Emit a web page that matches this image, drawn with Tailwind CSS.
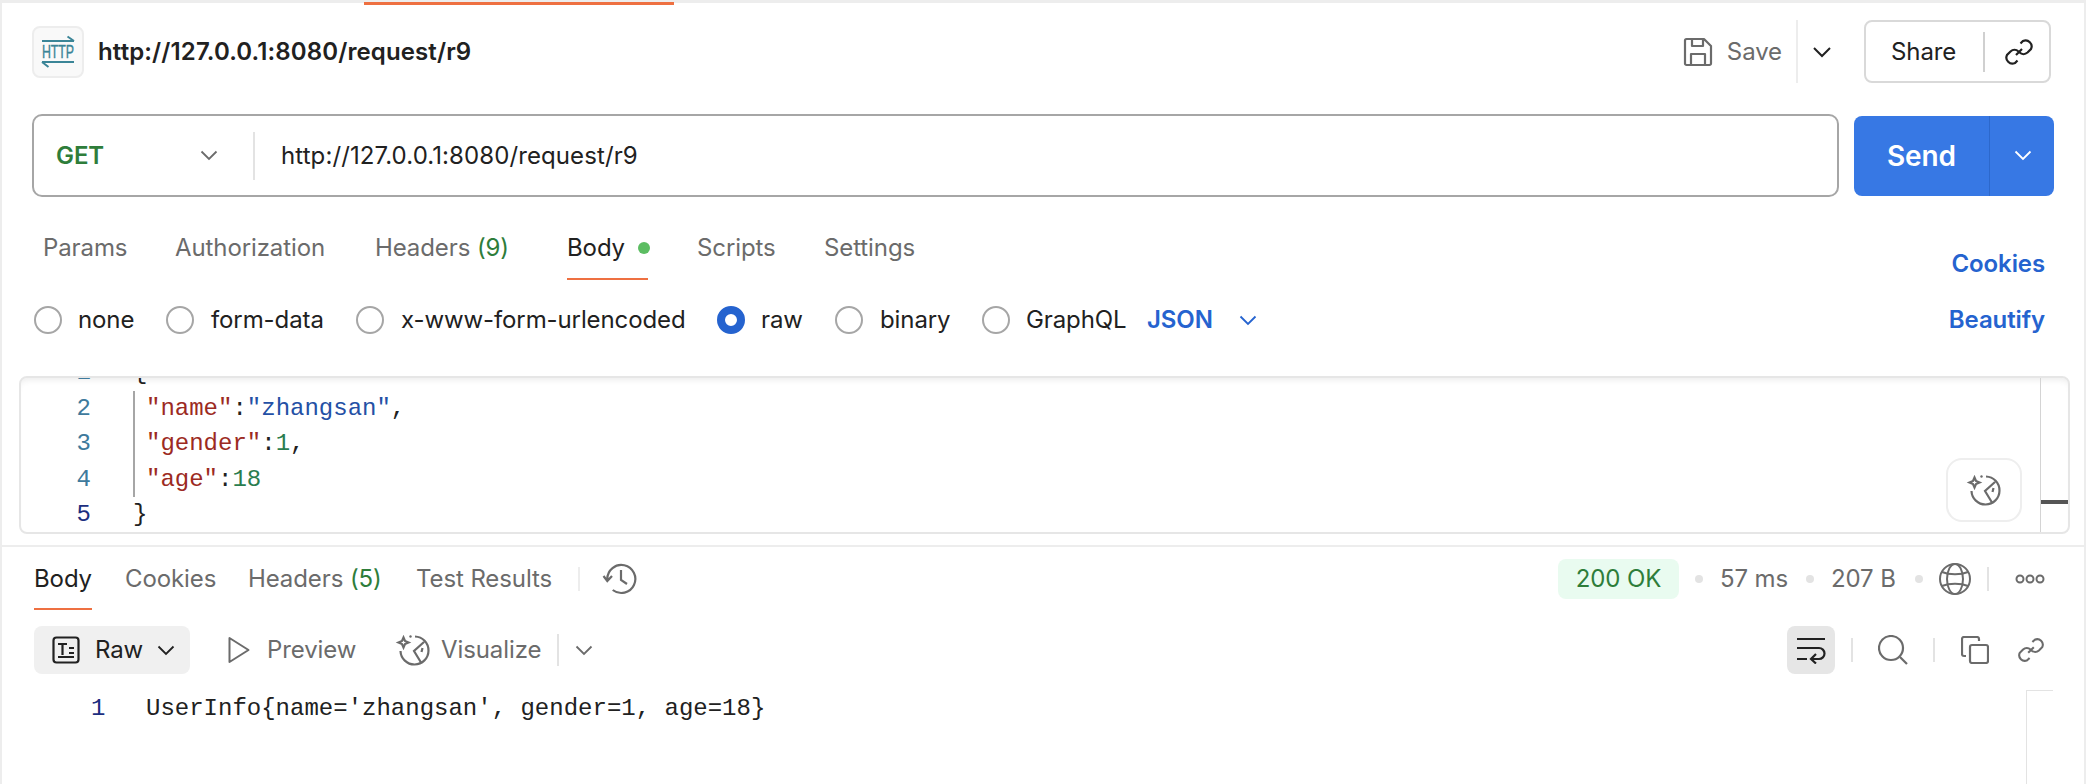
<!doctype html>
<html>
<head>
<meta charset="utf-8">
<script src="https://cdn.jsdelivr.net/npm/@tailwindcss/browser@4"></script>
</head>
<body class="bg-white">
<div class="relative w-[2086px] h-[784px] overflow-hidden bg-white font-['Inter',sans-serif] text-[24px] tracking-[-0.1px] text-[#212121] border-x-2 border-[#ededed] box-border">
  <!-- top strip -->
  <div class="flex h-[5px] border-t-[3px] border-[#ededed]">
    <div class="ml-[362px] w-[310px] h-[3px] -mt-[1px] bg-[#ee7041]"></div>
  </div>

  <!-- title row -->
  <div class="flex items-center h-[63px] mt-[15px] pl-[30px] pr-[33px]">
    <div class="w-[52px] h-[52px] rounded-lg border-2 border-[#ededed] bg-[#f9f9f9] flex items-center justify-center">
      <svg class="overflow-visible" width="36" height="42" viewBox="0 0 36 42" fill="none" stroke="#3b8597" stroke-width="2">
        <path d="M2 10h32M34 10l-6.500-4.500M2 31h32M2 31l6.500 5" />
        <text x="18" y="27" text-anchor="middle" font-family="Liberation Sans" font-size="18" fill="#3b8597" stroke="#3b8597" stroke-width="0.4" textLength="32" lengthAdjust="spacingAndGlyphs">HTTP</text>
      </svg>
    </div>
    <div class="ml-[14px] font-semibold tracking-[0.12px]">http://127.0.0.1:8080/request/r9</div>
    <div class="ml-auto flex items-center h-full">
      <svg width="30" height="30" viewBox="0 0 30 30" fill="none" stroke="#6b6b6b" stroke-width="2.200" stroke-linejoin="round"><path d="M2 3.500a1.500 1.500 0 0 1 1.500-1.500H21l7 7v17.500a1.500 1.500 0 0 1-1.500 1.500h-23A1.500 1.500 0 0 1 2 26.500zM9 2v7h11V2M8 28V17h14v11"/></svg>
      <span class="ml-[14px] text-[#6b6b6b]">Save</span>
      <div class="ml-[14px] w-[2px] h-[63px] bg-[#ededed]"></div>
      <svg class="ml-[14px]" width="20" height="12" viewBox="0 0 20 12" fill="none" stroke="#212121" stroke-width="2"><path d="M2 2l8 8 8-8"/></svg>
      <div class="ml-[32px] w-[187px] h-[63px] rounded-lg border-2 border-[#d9d9d9] flex items-center">
        <span class="ml-[25px] w-[66px]">Share</span>
        <div class="ml-[26px] w-[2px] h-[40px] bg-[#d0d0d0]"></div>
        <svg class="ml-[19px]" width="30" height="30" viewBox="0 0 30 30" fill="none" stroke="#212121" stroke-width="2.200"><path d="M12 18l6-6M16.500 6.500l2.500-2.500a6 6 0 0 1 8 8l-3.500 3.500a6 6 0 0 1-8 0M13.500 23.500l-2.500 2.500a6 6 0 0 1-8-8l3.500-3.500a6 6 0 0 1 8 0"/></svg>
      </div>
    </div>
  </div>

  <!-- URL row -->
  <div class="flex items-center mt-[31px] pl-[30px] pr-[30px] h-[83px]">
    <div class="w-[1807px] h-[83px] rounded-[10px] border-2 border-[#a6a6a6] flex items-center">
      <span class="ml-[22px] w-[110px] font-semibold text-[#2e7d3a]">GET</span>
      <svg class="ml-[34px]" width="18" height="11" viewBox="0 0 18 11" fill="none" stroke="#6b6b6b" stroke-width="1.800"><path d="M1.500 1.500L9 9l7.500-7.500"/></svg>
      <div class="ml-[35px] w-[2px] h-[48px] bg-[#e3e3e3]"></div>
      <span class="ml-[26px] tracking-[0.1px]">http://127.0.0.1:8080/request/r9</span>
    </div>
    <div class="ml-[15px] w-[200px] h-[80px] rounded-lg bg-[#3778e4] flex items-center text-white">
      <span class="ml-[33px] w-[102px] text-[28px] font-semibold">Send</span>
      <div class="w-[1px] h-[80px] bg-[#2c68cc]"></div>
      <svg class="ml-[24px]" width="18" height="11" viewBox="0 0 18 11" fill="none" stroke="#ffffff" stroke-width="1.800"><path d="M1.500 1.500L9 9l7.500-7.500"/></svg>
    </div>
  </div>

  <!-- request tabs -->
  <div class="flex items-start h-[105px] pl-[41px] pr-[39px] text-[#6b6b6b]">
    <div class="flex items-start h-[83px] pt-[33px]">
      <span class="w-[132px]">Params</span>
      <span class="w-[200px]">Authorization</span>
      <span class="w-[192px]">Headers <span class="text-[#2e7d3a]">(9)</span></span>
      <span class="relative w-[130px] h-[50px] flex items-start text-[#212121]">Body<span class="ml-[13px] mt-[12px] w-[12px] h-[12px] rounded-full bg-[#5cbd62]"></span><span class="absolute left-0 bottom-0 w-[81px] h-[2px] bg-[#ee7041]"></span></span>
      <span class="w-[127px]">Scripts</span>
      <span>Settings</span>
    </div>
    <span class="ml-auto mt-[49px] font-semibold text-[#2563cf]">Cookies</span>
  </div>

  <!-- body type row -->
  <div class="flex items-center h-[40px] -mt-[2px] pl-[32px] pr-[39px]">
    <span class="w-[28px] h-[28px] rounded-full border-2 border-[#a6a6a6]"></span><span class="ml-[16px] w-[88px]">none</span>
    <span class="w-[28px] h-[28px] rounded-full border-2 border-[#a6a6a6]"></span><span class="ml-[17px] w-[145px]">form-data</span>
    <span class="w-[28px] h-[28px] rounded-full border-2 border-[#a6a6a6]"></span><span class="ml-[17px] w-[316px]">x-www-form-urlencoded</span>
    <span class="w-[28px] h-[28px] rounded-full border-[8px] border-[#2563cf]"></span><span class="ml-[16px] w-[74px]">raw</span>
    <span class="w-[28px] h-[28px] rounded-full border-2 border-[#a6a6a6]"></span><span class="ml-[17px] w-[102px]">binary</span>
    <span class="w-[28px] h-[28px] rounded-full border-2 border-[#a6a6a6]"></span><span class="ml-[16px] w-[121px]">GraphQL</span>
    <span class="font-semibold text-[#2563cf] w-[92px]">JSON</span>
    <svg width="18" height="11" viewBox="0 0 18 11" fill="none" stroke="#2563cf" stroke-width="1.800"><path d="M1.500 1.500L9 9l7.500-7.500"/></svg>
    <span class="ml-auto font-semibold text-[#2563cf]">Beautify</span>
  </div>

  <!-- editor -->
  <div class="relative mt-[36px] ml-[17px] w-[2051px] h-[158px] rounded-lg border-2 border-[#e6e6e6] overflow-hidden flex font-['Liberation_Mono',monospace] text-[24px] tracking-normal leading-[35.500px] shadow-[inset_0_6px_6px_-4px_#ececec]">
    <div class="w-[70px] -mt-[23px] text-right text-[#3e7a9c] shrink-0">
      <div>1</div><div>2</div><div>3</div><div>4</div><div class="text-[#1c2e80]">5</div>
    </div>
    <div class="-mt-[23px] ml-[42px]">
      <div>{</div>
      <div class="pl-[11px] border-l-2 border-[#a6a6a6]"><span class="text-[#9c2a22]">"name"</span>:<span class="text-[#2450a5]">"zhangsan"</span>,</div>
      <div class="pl-[11px] border-l-2 border-[#a6a6a6]"><span class="text-[#9c2a22]">"gender"</span>:<span class="text-[#2a7d4f]">1</span>,</div>
      <div class="pl-[11px] border-l-2 border-[#a6a6a6]"><span class="text-[#9c2a22]">"age"</span>:<span class="text-[#2a7d4f]">18</span></div>
      <div>}</div>
    </div>
    <div class="absolute right-[46px] top-[80px] w-[76px] h-[64px] rounded-2xl border-2 border-[#eeeeee] bg-white flex items-center justify-center">
      <svg class="overflow-visible" width="32" height="32" viewBox="0 0 32 32" fill="none" stroke="#6b6b6b" stroke-width="2.200"><path d="M6.500 3.500L8 7l3.500 1.500L8 10l-1.500 3.500L5 10 1.500 8.500 5 7zM18 2.500A14 14 0 1 1 3.500 17M27 8l-10 9 7 11.500M25.500 14l-1 4"/><circle cx="13.500" cy="2.500" r="1.200" fill="#6b6b6b" stroke="none"/></svg>
    </div>
    <div class="absolute right-0 top-0 bottom-0 w-[28px] border-l border-[#d4d4d4]">
      <div class="mt-[122px] h-[4px] bg-[#555555]"></div>
    </div>
  </div>

  <!-- divider -->
  <div class="h-[2px] mt-[11px] bg-[#ededed]"></div>

  <!-- response tabs -->
  <div class="flex items-center h-[63px] pl-[32px] pr-[39px] text-[#6b6b6b]">
    <span class="relative w-[91px] h-[63px] flex items-center text-[#212121]">Body<span class="absolute left-0 bottom-0 w-[58px] h-[2px] bg-[#ee7041]"></span></span>
    <span class="w-[123px]">Cookies</span>
    <span class="w-[168px]">Headers <span class="text-[#2e7d3a]">(5)</span></span>
    <span class="w-[162px]">Test Results</span>
    <div class="w-[2px] h-[24px] bg-[#ededed]"></div>
    <svg class="ml-[24px] overflow-visible" width="34" height="32" viewBox="0 0 34 32" fill="none" stroke="#6b6b6b" stroke-width="2.200"><path d="M8.700 27A14 14 0 1 0 3.300 16M-0.500 13l3.800 5 4.700-5M17 7v10l6 4"/></svg>
    <div class="ml-auto flex items-center">
      <span class="w-[121px] h-[40px] rounded-lg bg-[#e9fbf0] text-[#2e7d3a] flex items-center justify-center">200 OK</span>
      <span class="ml-[16px] w-[8px] h-[8px] rounded-full bg-[#e3e3e3]"></span>
      <span class="ml-[17px] w-[69px]">57 ms</span>
      <span class="ml-[17px] w-[8px] h-[8px] rounded-full bg-[#e3e3e3]"></span>
      <span class="ml-[17px] w-[68px]">207 B</span>
      <span class="ml-[16px] w-[8px] h-[8px] rounded-full bg-[#e3e3e3]"></span>
      <svg class="ml-[16px]" width="32" height="32" viewBox="0 0 32 32" fill="none" stroke="#6b6b6b" stroke-width="2"><circle cx="16" cy="16" r="15"/><ellipse cx="16" cy="16" rx="8" ry="15"/><path d="M3 9c7 3 19 3 26 0M3 23c7-3 19-3 26 0"/></svg>
      <div class="ml-[16px] w-[2px] h-[24px] bg-[#e3e3e3]"></div>
      <svg class="ml-[26px]" width="30" height="10" viewBox="0 0 30 10" fill="none" stroke="#6b6b6b" stroke-width="2"><circle cx="5" cy="5" r="3.500"/><circle cx="15" cy="5" r="3.500"/><circle cx="25" cy="5" r="3.500"/></svg>
    </div>
  </div>

  <!-- response toolbar -->
  <div class="flex items-center h-[48px] mt-[16px] pl-[32px] pr-[39px] text-[#6b6b6b]">
    <div class="w-[156px] h-[48px] rounded-lg bg-[#f0f0f0] flex items-center text-[#212121]">
      <svg class="ml-[18px]" width="28" height="28" viewBox="0 0 28 28" fill="none" stroke="#212121" stroke-width="2.200"><rect x="1.500" y="1.500" width="25" height="25" rx="3"/><path d="M6 8h9M10.500 8v11M6 21h16M17 12h5M17 17h5"/></svg>
      <span class="ml-[15px] w-[47px]">Raw</span>
      <svg class="ml-[15px]" width="18" height="11" viewBox="0 0 18 11" fill="none" stroke="#212121" stroke-width="1.800"><path d="M1.500 1.500L9 9l7.500-7.500"/></svg>
    </div>
    <svg class="ml-[38px]" width="22" height="28" viewBox="0 0 22 28" fill="none" stroke="#6b6b6b" stroke-width="2"><path d="M1.500 2v24L20.500 14z" stroke-linejoin="round"/></svg>
    <span class="ml-[17px] w-[130px]">Preview</span>
    <svg class="overflow-visible" width="32" height="32" viewBox="0 0 32 32" fill="none" stroke="#6b6b6b" stroke-width="2.200"><path d="M6.500 3.500L8 7l3.500 1.500L8 10l-1.500 3.500L5 10 1.500 8.500 5 7zM18 2.500A14 14 0 1 1 3.500 17M27 8l-10 9 7 11.500M25.500 14l-1 4"/><circle cx="13.500" cy="2.500" r="1.200" fill="#6b6b6b" stroke="none"/></svg>
    <span class="ml-[12px] w-[116px]">Visualize</span>
    <div class="w-[2px] h-[32px] bg-[#e3e3e3]"></div>
    <svg class="ml-[16px]" width="18" height="11" viewBox="0 0 18 11" fill="none" stroke="#6b6b6b" stroke-width="1.800"><path d="M1.500 1.500L9 9l7.500-7.500"/></svg>
    <div class="ml-auto flex items-center">
      <div class="w-[48px] h-[48px] rounded-lg bg-[#e6e6e6] flex items-center justify-center">
        <svg width="30" height="28" viewBox="0 0 30 28" fill="none" stroke="#212121" stroke-width="2.200"><path d="M1 3h28M1 12h22a5.500 5.500 0 0 1 0 11h-8M1 23h10M20 18l-5 5 5 4.500"/></svg>
      </div>
      <div class="ml-[16px] w-[2px] h-[24px] bg-[#e3e3e3]"></div>
      <svg class="ml-[25px]" width="30" height="30" viewBox="0 0 30 30" fill="none" stroke="#6b6b6b" stroke-width="2.200"><circle cx="13" cy="13" r="12"/><path d="M22 22l7 7"/></svg>
      <div class="ml-[25px] w-[2px] h-[24px] bg-[#e3e3e3]"></div>
      <svg class="ml-[26px]" width="28" height="28" viewBox="0 0 28 28" fill="none" stroke="#6b6b6b" stroke-width="2.200"><rect x="9" y="9" width="18" height="18" rx="2"/><path d="M5 20H3a2 2 0 0 1-2-2V3a2 2 0 0 1 2-2h13a2 2 0 0 1 2 2v2"/></svg>
      <svg class="ml-[28px]" width="28" height="28" viewBox="0 0 30 30" fill="none" stroke="#6b6b6b" stroke-width="2.200"><path d="M12 18l6-6M16.500 6.500l2.500-2.500a6 6 0 0 1 8 8l-3.500 3.500a6 6 0 0 1-8 0M13.500 23.500l-2.500 2.500a6 6 0 0 1-8-8l3.500-3.500a6 6 0 0 1 8 0"/></svg>
    </div>
  </div>

  <!-- response body -->
  <div class="relative flex mt-[17px] font-['Liberation_Mono',monospace] text-[24px] tracking-normal leading-[36px]">
    <span class="ml-[89px] w-[55px] text-[#1c2e80]">1</span>
    <span>UserInfo{name='zhangsan', gender=1, age=18}</span>
    <div class="absolute left-[2024px] -top-[1px] w-[27px] h-[100px] border-l border-t border-[#e3e3e3]"></div>
  </div>
</div>
</body>
</html>
